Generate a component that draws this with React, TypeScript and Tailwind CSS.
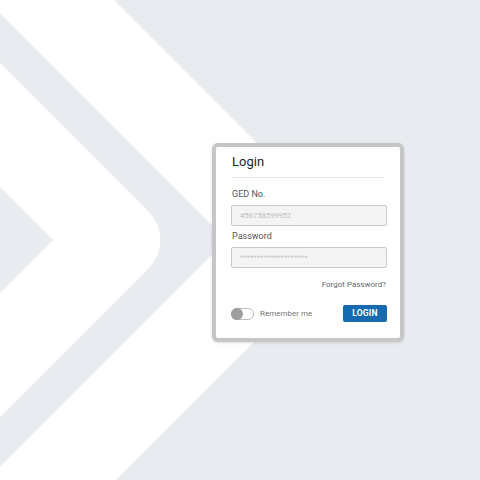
import React from "react";

function Background() {
  return (
    <svg
      className="absolute inset-0"
      width="480"
      height="480"
      viewBox="0 0 480 480"
      xmlns="http://www.w3.org/2000/svg"
    >
      <rect x="0" y="0" width="480" height="480" fill="#e8ebf0" />
      <path d="M355 241 L114 0 L-20 0 L-20 480 L116 480 Z" fill="#ffffff" />
      <path d="M227 240 L-13 0 L-20 0 L-20 480 L-13 480 Z" fill="#e8ebf0" />
      <path d="M-20 43 L148.7 211.7 A40 40 0 0 1 148.7 268.3 L-20 437 Z" fill="#ffffff" />
      <path d="M-20 167 L53 240 L-20 313 Z" fill="#e8ebf0" />
    </svg>
  );
}

export default function App() {
  return (
    <div
      className="relative w-[480px] h-[480px] overflow-hidden"
      style={{ fontFamily: "Roboto, 'Liberation Sans', sans-serif" }}
    >
      <Background />
      <div className="relative pl-[212px] pt-[143px]">
        <div className="w-[192px] h-[199px] rounded-[6px] border-[4px] border-[#c6c6c6] bg-white shadow-[0_1px_3px_rgba(0,0,0,0.12)] pl-[15px] pr-[13px] pt-[6px] flex flex-col">
          <div className="text-[13px] leading-[18px] text-[#1f1f1f] pl-[1px]">Login</div>
          <div className="mt-[6px] h-px bg-[#e6e6e6] mr-[2px]" />
          <div className="mt-[10px] text-[9px] leading-[12px] text-[#555] pl-[1px]">GED No.</div>
          <div className="mt-[5px] h-[21px] rounded-[2px] border border-[#c9c9c9] bg-[#f4f4f4] flex items-center pl-[8px] text-[7.5px] text-[#bdbdbd]">
            #56758599952
          </div>
          <div className="mt-[4px] text-[9px] leading-[12px] text-[#555] pl-[1px]">Password</div>
          <div className="mt-[5px] h-[21px] rounded-[2px] border border-[#c9c9c9] bg-[#f4f4f4] flex items-center pl-[8px] text-[7.4px] tracking-[0.2px] text-[#c4c4c4]">
            ********************
          </div>
          <div className="mt-[11px] text-right text-[8px] leading-[11px] text-[#666] pr-[1px]">Forgot Password?</div>
          <div className="mt-[15px] flex items-center justify-between">
            <div className="flex items-center">
              <div className="relative w-[23px] h-[12px] rounded-full border border-[#bdbdbd] bg-white">
                <div className="absolute left-[-1px] top-[-1px] w-[12px] h-[12px] rounded-full bg-[#9e9e9e]" />
              </div>
              <span className="ml-[6px] text-[8px] leading-[11px] text-[#777]">Remember me</span>
            </div>
            <div className="w-[44px] h-[17px] rounded-[2px] bg-[#1769b0] text-white text-[8.5px] font-bold flex items-center justify-center tracking-[0.2px]">
              LOGIN
            </div>
          </div>
        </div>
      </div>
    </div>
  );
}
